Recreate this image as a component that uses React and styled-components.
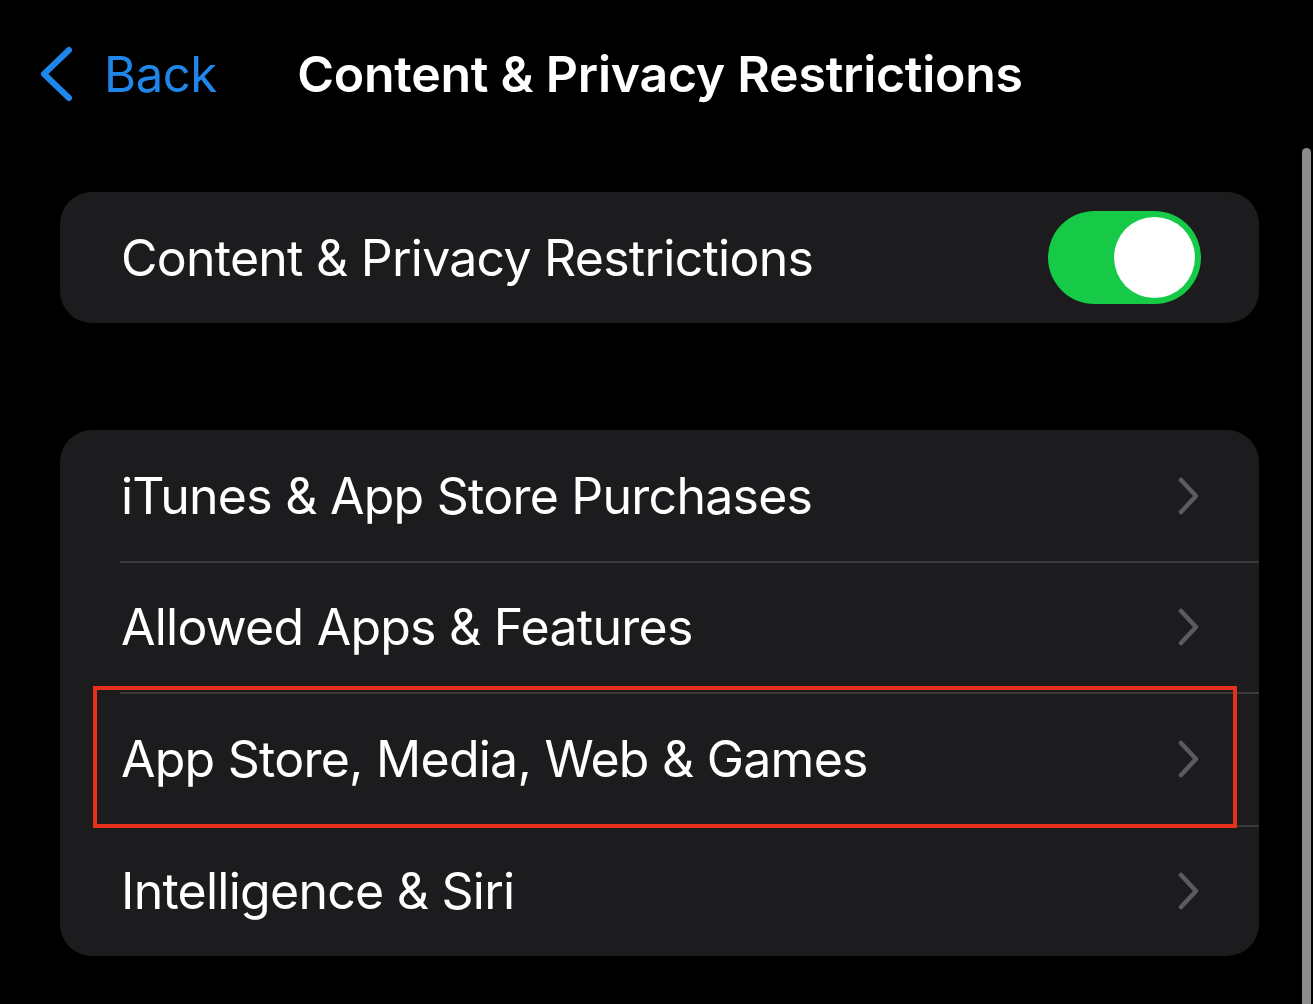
import React from "react";
import styled, { createGlobalStyle } from "styled-components";

const Global = createGlobalStyle`
  html, body { margin: 0; padding: 0; background: #000; }
  body { font-family: Inter, "Noto Sans", "Liberation Sans", sans-serif; -webkit-font-smoothing: antialiased; }
`;

const Page = styled.div`
  position: relative;
  width: 1313px;
  height: 1004px;
  background: #000;
  overflow: hidden;
  box-sizing: border-box;
  padding: 0 54px 0 60px;
`;

const Header = styled.header`
  display: grid;
  grid-template-columns: 1fr auto 1fr;
  align-items: center;
  height: 148px;
  margin: 0 -54px 0 -60px;
  padding: 0 31px 0 38px;
`;

const BackButton = styled.button`
  justify-self: start;
  display: flex;
  align-items: center;
  gap: 30px;
  background: none;
  border: 0;
  padding: 0;
  color: #1f86ea;
  font: 400 49px Inter, "Noto Sans", sans-serif;
  letter-spacing: -0.4px;
`;

const Title = styled.h1`
  margin: 0;
  color: #fff;
  font: 600 50px Inter, "Noto Sans", sans-serif;
  letter-spacing: -0.25px;
`;

const Card = styled.section`
  background: #1c1c1e;
  border-radius: 32px;
  margin-top: ${(p) => p.$top}px;
  overflow: hidden;
`;

const Row = styled.div`
  position: relative;
  display: flex;
  align-items: center;
  justify-content: space-between;
  height: ${(p) => p.$h || 131}px;
  padding: 0 58px 0 61px;
  &:not(:first-child)::before {
    content: "";
    position: absolute;
    top: 0;
    left: 60px;
    right: 0;
    height: 1.5px;
    background: #3a3a3c;
  }
`;

const Label = styled.span`
  color: #fff;
  font: 400 50px Inter, "Noto Sans", sans-serif;
  letter-spacing: -0.75px;
`;

const Toggle = styled.div`
  position: relative;
  width: 153px;
  height: 93px;
  border-radius: 47px;
  background: #16c947;
`;

const Knob = styled.div`
  position: absolute;
  top: 6px;
  right: 6px;
  width: 81px;
  height: 81px;
  border-radius: 50%;
  background: #fff;
`;

const Highlight = styled.div`
  position: absolute;
  left: 93px;
  top: 686px;
  width: 1144px;
  height: 142px;
  box-sizing: border-box;
  border: 4px solid #e8311b;
  pointer-events: none;
`;

const Scrollbar = styled.div`
  position: absolute;
  left: 1302px;
  top: 148px;
  width: 9px;
  bottom: -10px;
  border-radius: 5px;
  background: #8b8b8d;
`;

const Chevron = () => (
  <svg width="24" height="38" viewBox="0 0 24 38">
    <path d="M4 3 L19 19 L4 35" fill="none" stroke="#5b5b5f" strokeWidth="4.5" strokeLinecap="round" strokeLinejoin="round" />
  </svg>
);

const BackChevron = () => (
  <svg width="36" height="56" viewBox="0 0 36 56">
    <path d="M31 4 L6 28 L31 52" fill="none" stroke="#1f86ea" strokeWidth="6" strokeLinecap="round" strokeLinejoin="round" />
  </svg>
);

const items = [
  "iTunes & App Store Purchases",
  "Allowed Apps & Features",
  "App Store, Media, Web & Games",
  "Intelligence & Siri",
];

export default function App() {
  return (
    <Page>
      <Global />
      <Header>
        <BackButton>
          <BackChevron />
          Back
        </BackButton>
        <Title>Content &amp; Privacy Restrictions</Title>
        <div />
      </Header>
      <Card $top={44}>
        <Row $h={131}>
          <Label>Content &amp; Privacy Restrictions</Label>
          <Toggle>
            <Knob />
          </Toggle>
        </Row>
      </Card>
      <Card $top={107}>
        {items.map((t, i) => (
          <Row key={t} $h={i === 2 ? 133 : 131}>
            <Label>{t}</Label>
            <Chevron />
          </Row>
        ))}
      </Card>
      <Highlight />
      <Scrollbar />
    </Page>
  );
}
